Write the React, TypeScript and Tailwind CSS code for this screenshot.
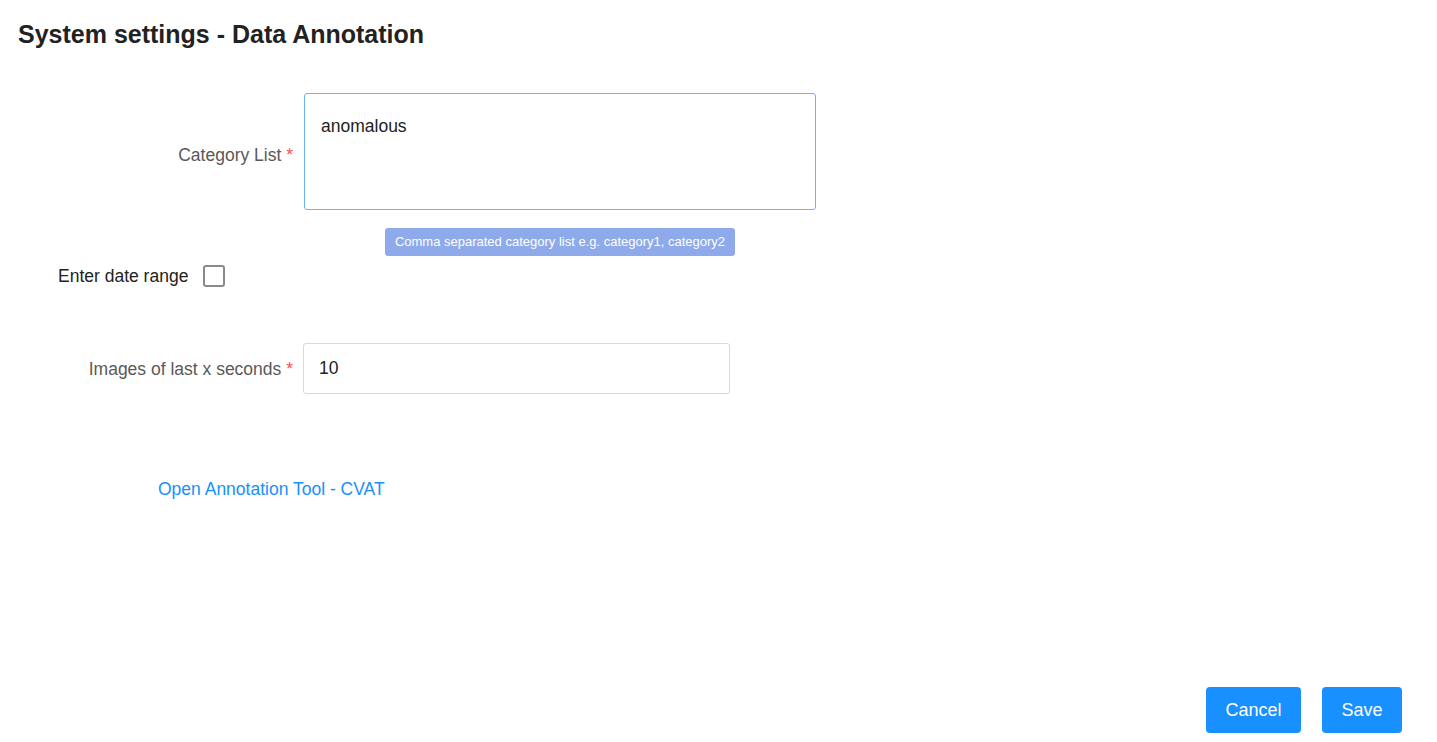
export default function App() {
  return (
    <div className="flex h-screen w-full flex-col bg-white font-['Liberation_Sans',Arial,sans-serif] text-[#262626]">
      <h1 className="px-[18px] pt-[18px] text-[25px] font-bold leading-8 text-[#222]">
        System settings - Data Annotation
      </h1>

      <form className="flex flex-col">
        {/* category list */}
        <div className="mt-[43px] flex items-center">
          <label className="w-[304px] pr-[11px] pt-[7px] text-right text-[17.5px] text-[#595959]">
            Category List <span className="text-[#ff4d4f]">*</span>
          </label>
          <textarea
            defaultValue="anomalous"
            className="h-[117px] w-[512px] resize-none rounded-[3px] border border-[#6cb4f7] px-[16px] pt-[22px] text-[17.5px] leading-5 text-[#222] outline-none"
          />
        </div>

        <div className="ml-[385px] mt-[18px] w-[350px] rounded-[3px] bg-[#8eaaea] py-[6px] text-center text-[13px] leading-4 text-white">
          Comma separated category list e.g. category1, category2
        </div>

        {/* date range */}
        <div className="ml-[58px] mt-[7px] flex items-center gap-[15px]">
          <span className="text-[17.5px] text-[#222]">Enter date range</span>
          <span className="h-[22px] w-[22px] rounded-[3px] border-2 border-[#8a8a8a] bg-white" />
        </div>

        {/* last x seconds */}
        <div className="mt-[54px] flex items-center">
          <label className="w-[303px] pr-[10px] text-right text-[17.5px] text-[#595959]">
            Images of last x seconds <span className="text-[#ff4d4f]">*</span>
          </label>
          <input
            defaultValue="10"
            className="h-[51px] w-[427px] rounded-[3px] border border-[#d9d9d9] px-[15px] text-[17.5px] text-[#222] outline-none"
          />
        </div>

        <a href="#" className="ml-[158px] mt-[83px] w-fit text-[17.5px] leading-6 text-[#1890ff]">
          Open Annotation Tool - CVAT
        </a>
      </form>

      <div className="flex-1" />

      <div className="mb-[9px] flex justify-end gap-[21px] pr-[35px]">
        <button className="h-[46px] w-[95px] rounded-[4px] bg-[#1890ff] text-[18px] text-white">Cancel</button>
        <button className="h-[46px] w-[80px] rounded-[4px] bg-[#1890ff] text-[18px] text-white">Save</button>
      </div>
    </div>
  )
}
